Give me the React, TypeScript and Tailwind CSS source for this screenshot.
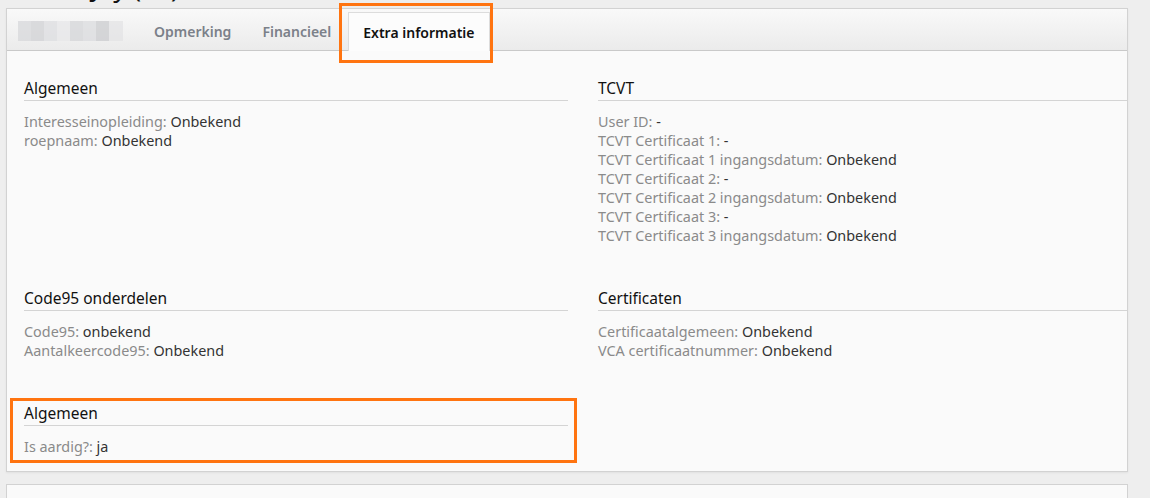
import React from "react";

type Item = { label: string; value: string };
type Section = { title: string; items: Item[] };

const rowOne: Section[] = [
    {
        title: "Algemeen",
        items: [
            { label: "Interesseinopleiding", value: "Onbekend" },
            { label: "roepnaam", value: "Onbekend" },
        ],
    },
    {
        title: "TCVT",
        items: [
            { label: "User ID", value: "-" },
            { label: "TCVT Certificaat 1", value: "-" },
            { label: "TCVT Certificaat 1 ingangsdatum", value: "Onbekend" },
            { label: "TCVT Certificaat 2", value: "-" },
            { label: "TCVT Certificaat 2 ingangsdatum", value: "Onbekend" },
            { label: "TCVT Certificaat 3", value: "-" },
            { label: "TCVT Certificaat 3 ingangsdatum", value: "Onbekend" },
        ],
    },
];

const rowTwo: Section[] = [
    {
        title: "Code95 onderdelen",
        items: [
            { label: "Code95", value: "onbekend" },
            { label: "Aantalkeercode95", value: "Onbekend" },
        ],
    },
    {
        title: "Certificaten",
        items: [
            { label: "Certificaatalgemeen", value: "Onbekend" },
            { label: "VCA certificaatnummer", value: "Onbekend" },
        ],
    },
];

function InfoSection({ section }: { section: Section }) {
    return (
        <div>
            <h3 className="text-[15.5px] leading-[20px] text-[#111] border-b border-[#d4d4d4] pb-[2px]">
                {section.title}
            </h3>
            <div className="mt-[11px] text-[14.4px] leading-[19px]">
                {section.items.map((item) => (
                    <div key={item.label}>
                        <span className="text-[#8a8a8a]">{item.label}:</span>{" "}
                        <span className="text-[#333]">{item.value}</span>
                    </div>
                ))}
            </div>
        </div>
    );
}

export default function App() {
    return (
        <div
            className="h-[498px] bg-[#eeeeee] overflow-hidden"
            style={{ fontFamily: '"Noto Sans", "Open Sans", sans-serif' }}
        >
            {/* page title, mostly scrolled out of view */}
            <div className="h-[8px] overflow-hidden relative">
                <h1 className="absolute left-[18px] bottom-[4px] text-[26px] leading-[34px] text-[#111] whitespace-nowrap">
                    Vries, Jay (32)
                </h1>
            </div>

            <div className="ml-[6px] w-[1122px] bg-[#fafafa] border border-[#d2d2d2] shadow-[0_1px_2px_rgba(0,0,0,0.06)] relative">
                {/* tabs */}
                <div className="h-[42px] flex items-end bg-gradient-to-b from-[#f9f9f9] to-[#ebebeb] border-b border-[#c9c9c9] pl-[11px]">
                    <div className="h-[38px] flex items-center">
                        <div className="flex opacity-70">
                            <span className="w-[13px] h-[20px] bg-[#d6d7da]" />
                            <span className="w-[13px] h-[20px] bg-[#cfd0d3]" />
                            <span className="w-[13px] h-[20px] bg-[#dcdde0]" />
                            <span className="w-[13px] h-[20px] bg-[#e7e7e9]" />
                            <span className="w-[13px] h-[20px] bg-[#d3d4d7]" />
                            <span className="w-[13px] h-[20px] bg-[#dadbde]" />
                            <span className="w-[13px] h-[20px] bg-[#c9cacd]" />
                            <span className="w-[14px] h-[20px] bg-[#e3e3e5]" />
                        </div>
                    </div>
                    <div className="h-[38px] flex items-center ml-[31px] text-[14px] font-semibold text-[#7b8089]">
                        Opmerking
                    </div>
                    <div className="h-[38px] flex items-center ml-[31px] text-[14px] font-semibold text-[#7b8089]">
                        Financieel
                    </div>
                    <div className="h-[39px] -mb-px ml-[17px] flex items-center px-[14px] bg-[#fcfcfc] border-x border-t border-[#dcdcdc] text-[14px] font-semibold text-[#111]">
                        Extra informatie
                    </div>
                </div>

                {/* content */}
                <div className="pt-[27px] pb-[15px] pl-[17px] grid grid-cols-[544px_1fr] gap-x-[30px] gap-y-[43px]">
                    {rowOne.map((s) => (
                        <InfoSection key={s.title} section={s} />
                    ))}
                    {rowTwo.map((s) => (
                        <InfoSection key={s.title} section={s} />
                    ))}
                    <div className="relative">
                        <InfoSection
                            section={{ title: "Algemeen", items: [{ label: "Is aardig?", value: "ja" }] }}
                        />
                        <div className="absolute -left-[14px] -right-[9px] -top-[5px] -bottom-[7px] border-[3px] border-[#ff7410] pointer-events-none" />
                    </div>
                </div>

                {/* highlight around active tab */}
                <div className="absolute left-[332px] top-[-6px] w-[154px] h-[60px] border-[3px] border-[#ff7410] pointer-events-none" />
            </div>

            <div className="ml-[6px] mt-[12px] w-[1122px] h-[40px] bg-[#fafafa] border border-[#d2d2d2]" />
        </div>
    );
}
